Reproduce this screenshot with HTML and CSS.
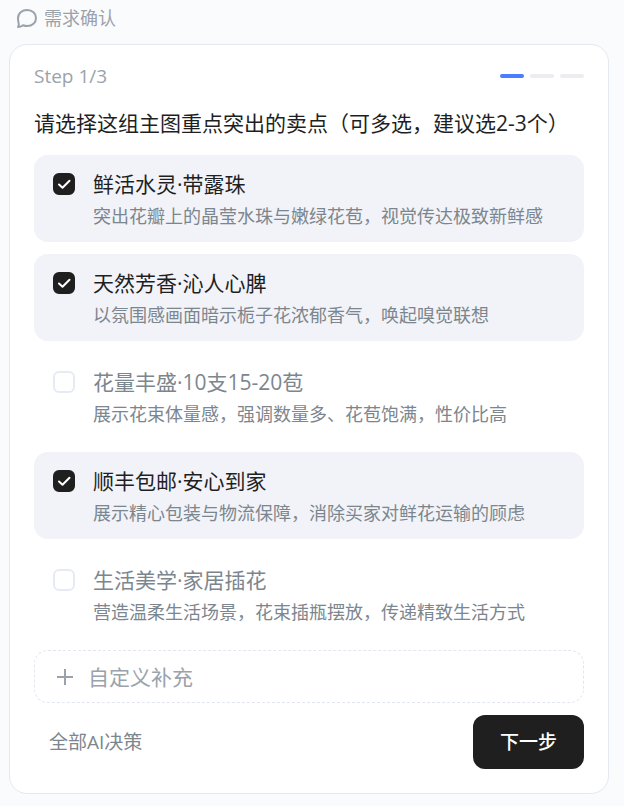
FILE: index.html
```html
<!DOCTYPE html>
<html lang="zh-CN">
<head>
<meta charset="utf-8">
<meta name="viewport" content="width=device-width, initial-scale=1">
<title>需求确认</title>
<link rel="stylesheet" href="styles.css">
</head>
<body>
<header class="topic">
  <svg class="topic-icon" viewBox="0 0 22 22" aria-hidden="true"><path d="M2 20c.9-1.300 1.100-2.700.6-4.300C2.200 14.300 2 12.700 2 11.200 2 6.200 6 3 11.200 3s8.800 3.400 8.800 8-3.700 8-8.800 8c-1.500 0-2.900-.3-4.200-.8C5.600 19.300 3.800 20 2 20z"/></svg>
  <span>需求确认</span>
</header>
<main class="card">
  <div class="progress">
    <span class="step">Step 1/3</span>
    <div class="bars"><span class="bar bar-active"></span><span class="bar"></span><span class="bar"></span></div>
  </div>
  <form class="form">
    <h1 class="question">请选择这组主图重点突出的卖点（可多选，建议选2-3个）</h1>
    <div class="options">
      <label class="option">
        <span class="check"><input type="checkbox" checked><svg viewBox="0 0 22 22" aria-hidden="true"><path d="M6 11.500l3.500 3.300 7-7"/></svg></span>
        <span class="copy"><span class="name">鲜活水灵·带露珠</span><span class="desc">突出花瓣上的晶莹水珠与嫩绿花苞，视觉传达极致新鲜感</span></span>
      </label>
      <label class="option">
        <span class="check"><input type="checkbox" checked><svg viewBox="0 0 22 22" aria-hidden="true"><path d="M6 11.500l3.500 3.300 7-7"/></svg></span>
        <span class="copy"><span class="name">天然芳香·沁人心脾</span><span class="desc">以氛围感画面暗示栀子花浓郁香气，唤起嗅觉联想</span></span>
      </label>
      <label class="option">
        <span class="check"><input type="checkbox"><svg viewBox="0 0 22 22" aria-hidden="true"><path d="M6 11.500l3.500 3.300 7-7"/></svg></span>
        <span class="copy"><span class="name">花量丰盛·10支15-20苞</span><span class="desc">展示花束体量感，强调数量多、花苞饱满，性价比高</span></span>
      </label>
      <label class="option">
        <span class="check"><input type="checkbox" checked><svg viewBox="0 0 22 22" aria-hidden="true"><path d="M6 11.500l3.500 3.300 7-7"/></svg></span>
        <span class="copy"><span class="name">顺丰包邮·安心到家</span><span class="desc">展示精心包装与物流保障，消除买家对鲜花运输的顾虑</span></span>
      </label>
      <label class="option">
        <span class="check"><input type="checkbox"><svg viewBox="0 0 22 22" aria-hidden="true"><path d="M6 11.500l3.500 3.300 7-7"/></svg></span>
        <span class="copy"><span class="name">生活美学·家居插花</span><span class="desc">营造温柔生活场景，花束插瓶摆放，传递精致生活方式</span></span>
      </label>
      <button type="button" class="custom">
        <svg class="plus" viewBox="0 0 16 16" aria-hidden="true"><path d="M8 0v16M0 8h16"/></svg>
        <span>自定义补充</span>
      </button>
    </div>
    <div class="actions">
      <button type="button" class="auto">全部AI决策</button>
      <button type="button" class="next">下一步</button>
    </div>
  </form>
</main>
</body>
</html>
```
FILE: styles.css
```css
* {
  box-sizing: border-box;
}

body {
  margin: 0;
  padding: 5px 15px 12px 9px;
  background: #fafbfd;
  color: #1f1f1f;
  font-family: "Open Sans", "Noto Sans CJK SC", sans-serif;
  font-size: 18px;
}

button {
  padding: 0;
  border: 0;
  background: none;
  font: inherit;
  cursor: pointer;
}

.topic {
  display: flex;
  align-items: center;
  gap: 6px;
  padding-left: 7px;
  margin-bottom: 13px;
  color: #9aa3ab;
  line-height: 26px;
}

.topic-icon {
  width: 22px;
  height: 22px;
  fill: none;
  stroke: currentColor;
  stroke-width: 2;
  stroke-linejoin: round;
}

.card {
  padding: 18px 24px 24px;
  border: 1px solid #e4e8f2;
  border-radius: 18px;
  background: #fff;
}

.progress {
  display: flex;
  align-items: center;
  justify-content: space-between;
  color: #9aa3ab;
  font-size: 19px;
  line-height: 26px;
}

.bars {
  display: flex;
  gap: 6px;
}

.bar {
  width: 24px;
  height: 4px;
  border-radius: 2px;
  background: #ebedf0;
}

.bar-active {
  background: #4a7dff;
}

.question {
  margin: 19px 0 17px;
  font-size: 21px;
  font-weight: 400;
  line-height: 30px;
}

.options {
  display: flex;
  flex-direction: column;
  gap: 12px;
}

.option {
  display: flex;
  align-items: flex-start;
  gap: 18px;
  padding: 14px 19px;
  border-radius: 14px;
  color: #7c868e;
  cursor: pointer;
}

.option:has(input:checked) {
  background: #f2f3f8;
}

.option:has(input:checked) .name {
  color: #1f1f1f;
}

.check {
  display: grid;
  flex: none;
  margin-top: 4px;
}

.check input,
.check svg {
  grid-area: 1 / 1;
  width: 22px;
  height: 22px;
  margin: 0;
}

.check input {
  appearance: none;
  border: 2px solid #e6eaf5;
  border-radius: 6px;
  background: #fff;
}

.check input:checked {
  border-color: #1f1f1f;
  background: #1f1f1f;
}

.check svg {
  visibility: hidden;
  pointer-events: none;
  fill: none;
  stroke: #fff;
  stroke-width: 2;
  stroke-linecap: round;
  stroke-linejoin: round;
}

.check input:checked + svg {
  visibility: visible;
}

.copy {
  display: flex;
  flex-direction: column;
  gap: 5px;
}

.name {
  font-size: 21px;
  line-height: 30px;
}

.desc {
  line-height: 24px;
}

.custom {
  display: flex;
  align-items: center;
  gap: 15px;
  padding: 11px 22px 10px;
  border: 1px dashed #e2e6ef;
  border-radius: 14px;
  color: #9aa3ab;
  font-size: 21px;
  line-height: 30px;
}

.plus {
  width: 16px;
  height: 16px;
  stroke: currentColor;
  stroke-width: 2;
}

.actions {
  display: flex;
  align-items: center;
  justify-content: space-between;
  margin-top: 12px;
}

.auto {
  padding: 14px 15px;
  color: #7c868e;
  font-size: 19px;
  line-height: 26px;
}

.next {
  padding: 14px 27px;
  border-radius: 12px;
  background: #1f1f1f;
  color: #fff;
  font-size: 19px;
  font-weight: 500;
  line-height: 26px;
}
```
